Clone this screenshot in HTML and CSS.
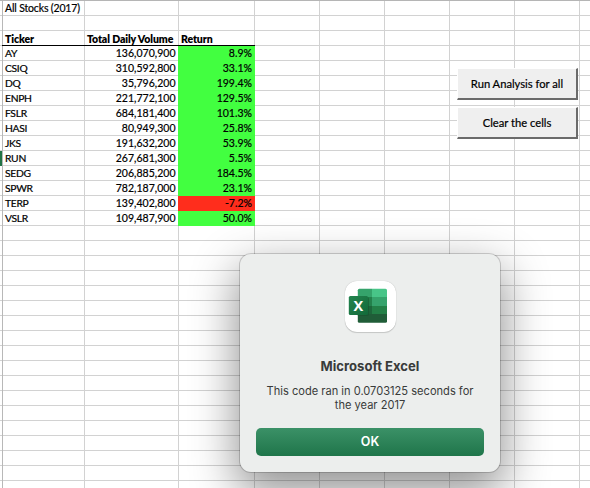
FILE: index.html
```html
<!DOCTYPE html>
<html lang="en">
<head>
<meta charset="utf-8">
<title>All Stocks (2017)</title>
<link rel="stylesheet" href="styles.css">
</head>
<body>
<main class="sheet">
  <table class="cells">
    <colgroup><col class="col-ticker"><col class="col-volume"><col class="col-return"></colgroup>
    <tbody>
      <tr><td class="title">All Stocks (2017)</td><td></td><td></td></tr>
      <tr><td></td><td></td><td></td></tr>
      <tr class="head"><th>Ticker</th><th class="vol-head">Total Daily Volume</th><th>Return</th></tr>
      <tr><td>AY</td><td class="num">136,070,900</td><td class="num up">8.9%</td></tr>
      <tr><td>CSIQ</td><td class="num">310,592,800</td><td class="num up">33.1%</td></tr>
      <tr><td>DQ</td><td class="num">35,796,200</td><td class="num up">199.4%</td></tr>
      <tr><td>ENPH</td><td class="num">221,772,100</td><td class="num up">129.5%</td></tr>
      <tr><td>FSLR</td><td class="num">684,181,400</td><td class="num up">101.3%</td></tr>
      <tr><td>HASI</td><td class="num">80,949,300</td><td class="num up">25.8%</td></tr>
      <tr><td>JKS</td><td class="num">191,632,200</td><td class="num up">53.9%</td></tr>
      <tr class="active"><td>RUN</td><td class="num">267,681,300</td><td class="num up">5.5%</td></tr>
      <tr><td>SEDG</td><td class="num">206,885,200</td><td class="num up">184.5%</td></tr>
      <tr><td>SPWR</td><td class="num">782,187,000</td><td class="num up">23.1%</td></tr>
      <tr><td>TERP</td><td class="num">139,402,800</td><td class="num down">-7.2%</td></tr>
      <tr><td>VSLR</td><td class="num">109,487,900</td><td class="num up">50.0%</td></tr>
    </tbody>
  </table>
  <div class="macros">
    <button class="macro">Run Analysis for all</button>
    <button class="macro">Clear the cells</button>
  </div>
</main>
<section class="dialog" role="dialog">
  <div class="app-icon">
    <svg width="52" height="52" viewBox="0 0 52 52">
      <defs>
        <linearGradient id="tile" x1="0" y1="0" x2="1" y2="1"><stop offset="0" stop-color="#23844f"/><stop offset="1" stop-color="#126a39"/></linearGradient>
        <clipPath id="book"><rect x="12.8" y="7.8" width="29.2" height="34" rx="1.5"/></clipPath>
      </defs>
      <g clip-path="url(#book)">
        <path fill="#35a36b" d="M12 7h15v9H12z"/>
        <path fill="#48c588" d="M27 7h15v9H27z"/>
        <path fill="#23814b" d="M12 16h15v9H12z"/>
        <path fill="#36a36c" d="M27 16h15v9H27z"/>
        <path fill="#1d673b" d="M12 25h15v8H12z"/>
        <path fill="#238047" d="M27 25h15v8H27z"/>
        <path fill="#205d38" d="M12 33h30v9H12z"/>
        <rect x="6" y="16" width="18" height="19" rx="2" fill="#174f2d" opacity=".55"/>
      </g>
      <rect x="3.8" y="15" width="19.3" height="19" rx="1.6" fill="url(#tile)"/>
      <text class="icon-letter" x="13.4" y="30" text-anchor="middle">X</text>
    </svg>
  </div>
  <h1 class="dialog-title">Microsoft Excel</h1>
  <p class="message">This code ran in 0.0703125 seconds for<br>the year 2017</p>
  <button class="ok">OK</button>
</section>
</body>
</html>
```
FILE: styles.css
```css
* { box-sizing: border-box; }

body {
  margin: 0;
  width: 590px;
  height: 488px;
  overflow: hidden;
  position: relative;
  background: #fff;
}

.sheet {
  display: flex;
  align-items: flex-start;
  height: 488px;
  padding-left: 2px;
  border-top: 1px solid #b5b5b5;
  font-family: Lato, "Liberation Sans", sans-serif;
  font-size: 10.5px;
  font-weight: 400;
  color: #000;
  background:
    linear-gradient(#b8b8b8, #b8b8b8) 2px 0 / 1px 100% no-repeat,
    linear-gradient(#d2d2d2, #d2d2d2) 84px 0 / 1px 100% no-repeat,
    linear-gradient(#d2d2d2, #d2d2d2) 178px 0 / 1px 100% no-repeat,
    repeating-linear-gradient(to right, #d2d2d2 0 1px, transparent 1px 65px) 254px 0 / 390px 100% no-repeat,
    repeating-linear-gradient(to bottom, transparent 0 14px, #d2d2d2 14px 15px);
}

.cells {
  width: 253px;
  table-layout: fixed;
  border-collapse: separate;
  border-spacing: 0;
  flex: none;
}

.col-ticker { width: 83px; }
.col-volume { width: 93px; }
.col-return { width: 77px; }

.cells tr { height: 15px; }

.cells td,
.cells th {
  height: 15px;
  padding: 0 2px 1px 3px;
  line-height: 14px;
  text-align: left;
  white-space: nowrap;
  letter-spacing: -0.3px;
  -webkit-text-stroke: 0.2px #000;
}

.cells td { font-size: 10.3px; }
.cells td.title { font-size: 10.5px; letter-spacing: -0.15px; }
.cells th { font-weight: 800; letter-spacing: -0.1px; -webkit-text-stroke: 0; }
.cells .head th { border-bottom: 1px solid #000; padding: 2px 2px 0 3px; line-height: 12px; }
.cells .head .vol-head { padding-left: 2px; }
.cells .head th:first-child { box-shadow: inset 1px 0 #b8b8b8; }
.cells td.num { font-size: 10.5px; text-align: right; letter-spacing: 0.02px; padding-right: 2.5px; }
.cells td.up, .cells td.down { padding-right: 3px; }
.up { background: #42ff40; }
.down { background: #ff2d1c; }
.active td:first-child { box-shadow: -2px 0 #217346; }

.macros {
  display: flex;
  flex-direction: column;
  gap: 7px;
  margin: 67px 0 0 202px;
}

.macro {
  width: 121px;
  height: 32px;
  padding: 0 0 1px;
  border: 1px solid #fff;
  border-right: 2px solid #6b6b6b;
  border-bottom: 2px solid #6b6b6b;
  background: #efefef;
  font: 400 11.2px Lato, "Liberation Sans", sans-serif;
  color: #000;
  -webkit-text-stroke: 0.2px #000;
}

.dialog {
  position: absolute;
  left: 240px;
  top: 254px;
  width: 260px;
  height: 218px;
  padding: 27px 16px 16px;
  display: flex;
  flex-direction: column;
  align-items: center;
  border-radius: 11px;
  background: #eceeed;
  box-shadow: 0 0 0 1px rgba(0, 0, 0, .17), 0 17px 46px 3px rgba(0, 0, 0, .43);
  font-family: Inter, "Liberation Sans", sans-serif;
  color: #393b3a;
}

.app-icon {
  width: 51px;
  height: 51px;
  border-radius: 12px;
  background: #fff;
  box-shadow: 0 0 1px rgba(0, 0, 0, .25), 0 1px 1px rgba(0, 0, 0, .15);
}

.app-icon svg { display: block; }

.icon-letter {
  font: 700 14.5px "Open Sans", sans-serif;
  fill: #fff;
}

.dialog-title {
  margin: 26px 0 0;
  font-size: 13.1px;
  line-height: 17px;
  font-weight: 700;
}

.message {
  margin: 9px 0 0;
  font-size: 11.1px;
  line-height: 14px;
  text-align: center;
  white-space: nowrap;
}

.ok {
  width: 228px;
  height: 28px;
  margin-top: auto;
  padding: 0 0 1px;
  border: 0;
  border-radius: 5px;
  background: linear-gradient(#3b9167, #1f754a);
  color: #fff;
  font: 600 12.5px Inter, "Liberation Sans", sans-serif;
}
```
